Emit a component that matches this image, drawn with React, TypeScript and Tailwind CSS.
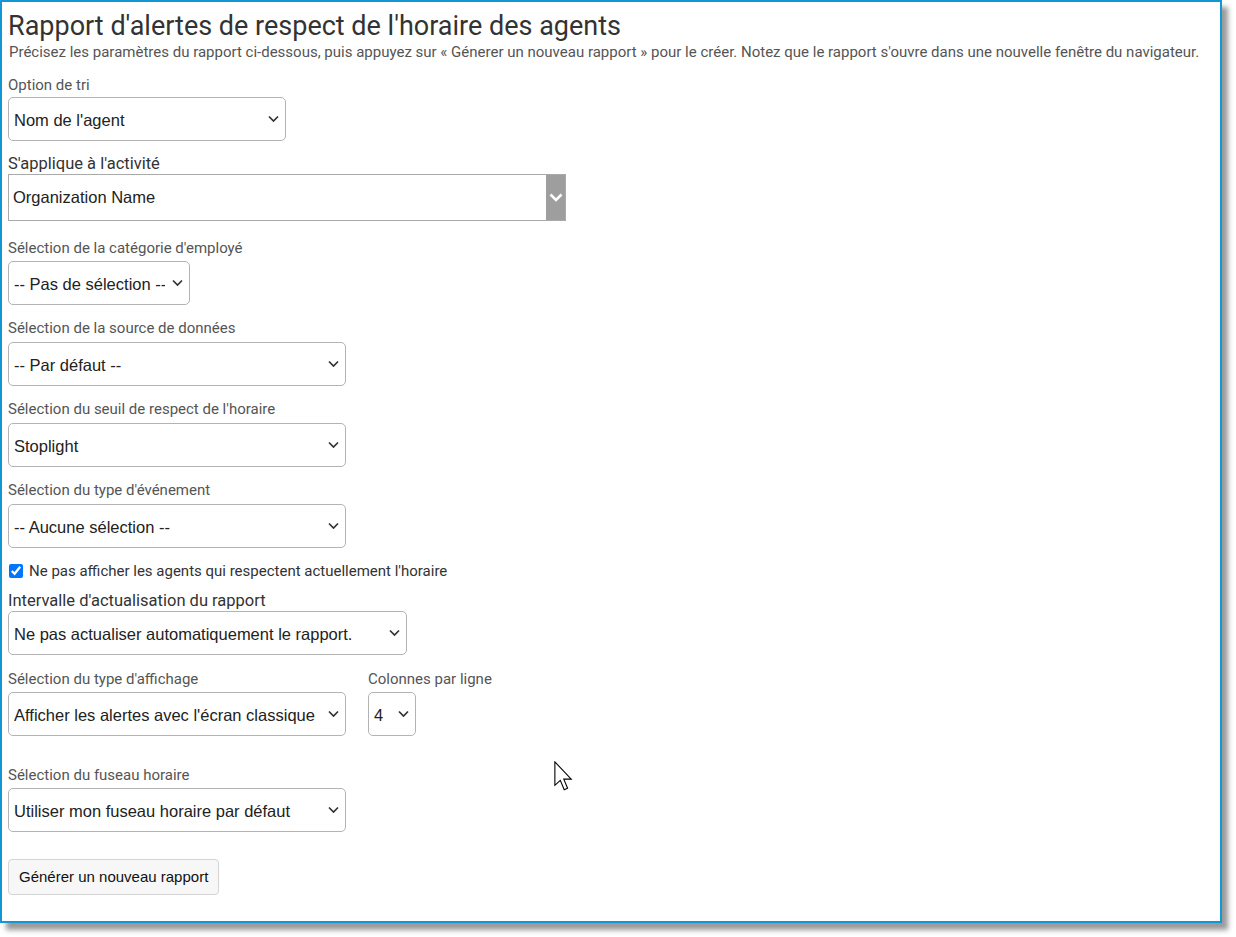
import React from "react";

const ROBOTO = "font-['Roboto',_'Liberation_Sans',_sans-serif]";
const ARIAL = "font-['Liberation_Sans',_Arial,_sans-serif]";

function Chevron() {
  return (
    <svg width="11" height="7" viewBox="0 0 11 7" className="pointer-events-none absolute right-[7px] top-1/2 -translate-y-1/2">
      <path d="M1 1 L5.5 5.5 L10 1" fill="none" stroke="#333" strokeWidth="1.7" />
    </svg>
  );
}

function Select({ value, className }: { value: string; className: string }) {
  return (
    <div className={`relative h-[44px] ${className}`}>
      <select
        defaultValue={value}
        className={`h-full w-full appearance-none rounded-[5px] border border-[#b3b3b3] bg-white pl-[5px] pr-[24px] pt-[2px] text-[16.5px] text-[#222] outline-none ${ARIAL}`}
      >
        <option>{value}</option>
      </select>
      <Chevron />
    </div>
  );
}

function Label({ children, big, className = "" }: { children: React.ReactNode; big?: boolean; className?: string }) {
  return (
    <label
      className={`block leading-[20px] ${ROBOTO} ${big ? "text-[16.5px] text-[#333]" : "text-[15px] text-[#555]"} ${className}`}
    >
      {children}
    </label>
  );
}

export default function App() {
  return (
    <div className="relative h-[937px] w-[1236px] bg-white">
      <div className="h-[923px] w-[1222px] border-2 border-[#1396d4] bg-white pl-[6px] pt-[10px] shadow-[6px_7px_5px_rgba(0,0,0,0.4)]">
        <h1 className={`text-[27px] leading-[28px] text-[#333] ${ROBOTO}`}>
          Rapport d'alertes de respect de l'horaire des agents
        </h1>
        <p className={`mt-[2px] pl-[1px] text-[15px] leading-[20px] text-[#555] ${ROBOTO}`}>
          Précisez les paramètres du rapport ci-dessous, puis appuyez sur « Génerer un nouveau rapport » pour le créer. Notez que le rapport s'ouvre dans une nouvelle fenêtre du navigateur.
        </p>

        <Label className="mt-[13px]">Option de tri</Label>
        <Select value="Nom de l'agent" className="mt-[2px] w-[278px]" />

        <Label big className="mt-[13px]">S'applique à l'activité</Label>
        <div className="flex h-[47px] w-[558px] border border-[#aaa] bg-white">
          <div className={`flex flex-1 items-center pl-[4px] text-[16.5px] text-[#222] ${ARIAL}`}>Organization Name</div>
          <div className="flex w-[19px] items-center justify-center bg-[#9e9e9e]">
            <svg width="14" height="9" viewBox="0 0 14 9">
              <path d="M1.5 1.5 L7 7 L12.5 1.5" fill="none" stroke="#fff" strokeWidth="2.6" />
            </svg>
          </div>
        </div>

        <Label className="mt-[17px]">Sélection de la catégorie d'employé</Label>
        <Select value="-- Pas de sélection --" className="mt-[3px] w-[182px]" />

        <Label className="mt-[13px]">Sélection de la source de données</Label>
        <Select value="-- Par défaut --" className="mt-[4px] w-[338px]" />

        <Label className="mt-[13px]">Sélection du seuil de respect de l'horaire</Label>
        <Select value="Stoplight" className="mt-[4px] w-[338px]" />

        <Label className="mt-[13px]">Sélection du type d'événement</Label>
        <Select value="-- Aucune sélection --" className="mt-[4px] w-[338px]" />

        <div className={`mt-[13px] flex h-[20px] items-center gap-[6px] text-[15px] text-[#333] ${ROBOTO}`}>
          <input type="checkbox" defaultChecked className="ml-[1px] h-[14px] w-[14px]" />
          <span>Ne pas afficher les agents qui respectent actuellement l'horaire</span>
        </div>

        <Label big className="mt-[10px]">Intervalle d'actualisation du rapport</Label>
        <Select value="Ne pas actualiser automatiquement le rapport." className="w-[399px]" />

        <div className="mt-[14px] flex gap-[22px]">
          <div>
            <Label>Sélection du type d'affichage</Label>
            <Select value="Afficher les alertes avec l'écran classique" className="mt-[3px] w-[338px]" />
          </div>
          <div>
            <Label>Colonnes par ligne</Label>
            <Select value="4" className="mt-[3px] w-[48px]" />
          </div>
        </div>

        <Label className="mt-[29px]">Sélection du fuseau horaire</Label>
        <Select value="Utiliser mon fuseau horaire par défaut" className="mt-[3px] w-[338px]" />

        <button
          className={`mt-[27px] h-[36px] rounded-[4px] border border-[#d4d4d4] bg-[#f7f7f7] px-[10px] text-[15px] text-[#111] ${ARIAL}`}
        >
          Générer un nouveau rapport
        </button>
      </div>

      {/* pointeur de souris */}
      <svg width="19" height="30" viewBox="0 0 13 20.5" className="absolute left-[554px] top-[761px]">
        <path d="M0.6 0.6 V16.6 L4.3 13.2 L7 19.6 L9.3 18.6 L6.7 12.4 H11.8 Z" fill="#fff" stroke="#000" strokeWidth="0.75" strokeLinejoin="miter" />
      </svg>
    </div>
  );
}
